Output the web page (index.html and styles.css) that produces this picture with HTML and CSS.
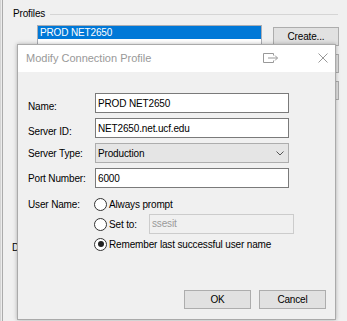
FILE: index.html
```html
<!DOCTYPE html>
<html>
<head>
<meta charset="utf-8">
<link rel="stylesheet" href="styles.css">
</head>
<body>
<div class="win">
  <div class="edge"></div>
  <div class="main">
    <div class="group-head"><span>Profiles</span><div class="rule"></div></div>
    <div class="profiles">
      <div class="listbox"><div class="item sel">PROD NET2650</div></div>
      <div class="btncol">
        <div class="pbtn">Create...</div>
        <div class="pbtn">Edit...</div>
        <div class="pbtn">Delete</div>
      </div>
    </div>
    <div class="below">Default profile:</div>
  </div>
</div>

<div class="dialog">
  <div class="titlebar">
    <span class="title">Modify Connection Profile</span>
    <svg class="ico-restore" width="15" height="11" viewBox="0 0 15 11"><path d="M10.5 2.5V0.5H0.5V9.5H10.5V7.5M5 5H14.5M12 2.5L14.5 5L12 7.5" fill="none" stroke="#999" stroke-width="1"/></svg>
    <svg class="ico-close" width="10" height="10" viewBox="0 0 10 10"><path d="M0.5 0.5L9.5 9.5M9.5 0.5L0.5 9.5" stroke="#999" stroke-width="1"/></svg>
  </div>
  <div class="dbody">
    <div class="form">
      <div class="lbl low">Name:</div>
      <div class="field">PROD NET2650</div>
      <div class="lbl low">Server ID:</div>
      <div class="field">NET2650.net.ucf.edu</div>
      <div class="lbl">Server Type:</div>
      <div class="combo"><span>Production</span><svg width="8" height="5" viewBox="0 0 8 5"><path d="M0.5 0.5L4 4L7.5 0.5" fill="none" stroke="#555" stroke-width="1"/></svg></div>
      <div class="lbl">Port Number:</div>
      <div class="field">6000</div>
    </div>
    <div class="users">
      <div class="lbl">User Name:</div>
      <div class="radios">
        <div class="rrow"><span class="radio"></span><span>Always prompt</span></div>
        <div class="rrow"><span class="radio"></span><span class="setto">Set to:</span><div class="field dis">ssesit</div></div>
        <div class="rrow"><span class="radio on"></span><span>Remember last successful user name</span></div>
      </div>
    </div>
    <div class="actions">
      <div class="btn">OK</div>
      <div class="btn">Cancel</div>
    </div>
  </div>
</div>
</body>
</html>
```
FILE: styles.css
```css
* { box-sizing: border-box; }
html, body { margin: 0; }
body {
  width: 347px;
  height: 321px;
  overflow: hidden;
  position: relative;
  background: #f0f0f0;
  font-family: "Liberation Sans", Arial, sans-serif;
  font-size: 10px;
  letter-spacing: -0.15px;
  color: #000;
}
.win { height: 321px; display: flex; }
.edge {
  width: 4px;
  flex: none;
  background: linear-gradient(to right, #d4d4d4 0 1px, #ececec 1px 2px, #ababab 2px 3px, #f0f0f0 3px);
}
.main { flex: 1; padding: 8px 0 0 9px; }
.group-head { display: flex; align-items: center; gap: 5px; height: 12px; line-height: 12px; }
.rule { flex: 1; height: 1px; background: #d5d5d5; margin-right: 9px; }
.profiles { display: flex; margin-top: 5px; padding-left: 24px; }
.listbox { width: 225px; height: 110px; background: #fff; border: 1px solid #abadb3; }
.item { height: 13px; line-height: 13px; padding-left: 2px; }
.item.sel { background: #0078d7; color: #fff; }
.btncol { margin-left: 11px; margin-top: 2px; display: flex; flex-direction: column; gap: 8px; width: 66px; }
.pbtn {
  height: 19px;
  background: #e1e1e1;
  border: 1px solid #adadad;
  display: flex; align-items: center; justify-content: center;
}
.below { margin: 107px 0 0 -1px; }

.dialog {
  position: absolute;
  left: 17px; top: 44px;
  width: 319px; height: 276px;
  border: 1px solid #aaaaaa;
  background: #f0f0f0;
  box-shadow: 0 0 4px rgba(0,0,0,0.28);
  display: flex; flex-direction: column;
}
.titlebar {
  height: 27px; flex: none;
  background: #fff;
  display: flex; align-items: center;
  padding-left: 8px;
  padding-bottom: 1px;
  color: #999;
  font-size: 11px;
  letter-spacing: 0;
}
.title { flex: 1; }
.ico-restore { margin-right: 40px; }
.ico-close { margin-right: 7px; }
.dbody { flex: 1; display: flex; flex-direction: column; padding: 21px 9px 10px 10px; }
.form { display: grid; grid-template-columns: 67px 194px; grid-auto-rows: 20px; row-gap: 5px; }
.lbl { display: flex; align-items: center; }
.lbl.low { padding-top: 7px; }
.field {
  border: 1px solid #7a7a7a;
  background: #fff;
  padding-left: 2px;
  display: flex; align-items: center;
}
.combo {
  border: 1px solid #adadad;
  background: #e5e5e5;
  padding: 0 4px 0 2px;
  display: flex; align-items: center; justify-content: space-between;
}
.users { display: grid; grid-template-columns: 66px 1fr; margin-top: 6px; }
.users .lbl { height: 20px; align-self: start; }
.radios { display: flex; flex-direction: column; }
.rrow { height: 20px; display: flex; align-items: center; gap: 2px; }
.radio {
  width: 13px; height: 13px; flex: none;
  border: 1px solid #333;
  border-radius: 50%;
  background: #fff;
  display: flex; align-items: center; justify-content: center;
}
.radio.on::after { content: ""; width: 6px; height: 6px; border-radius: 50%; background: #222; }
.setto { width: 38px; }
.field.dis {
  width: 145px; height: 20px;
  margin-top: -1px;
  background: #f0f0f0;
  border-color: #cccccc;
  color: #9a9a9a;
}
.actions { margin-top: auto; display: flex; justify-content: flex-end; gap: 8px; }
.btn {
  width: 67px; height: 19px;
  background: #e1e1e1;
  border: 1px solid #adadad;
  display: flex; align-items: center; justify-content: center;
}
```
